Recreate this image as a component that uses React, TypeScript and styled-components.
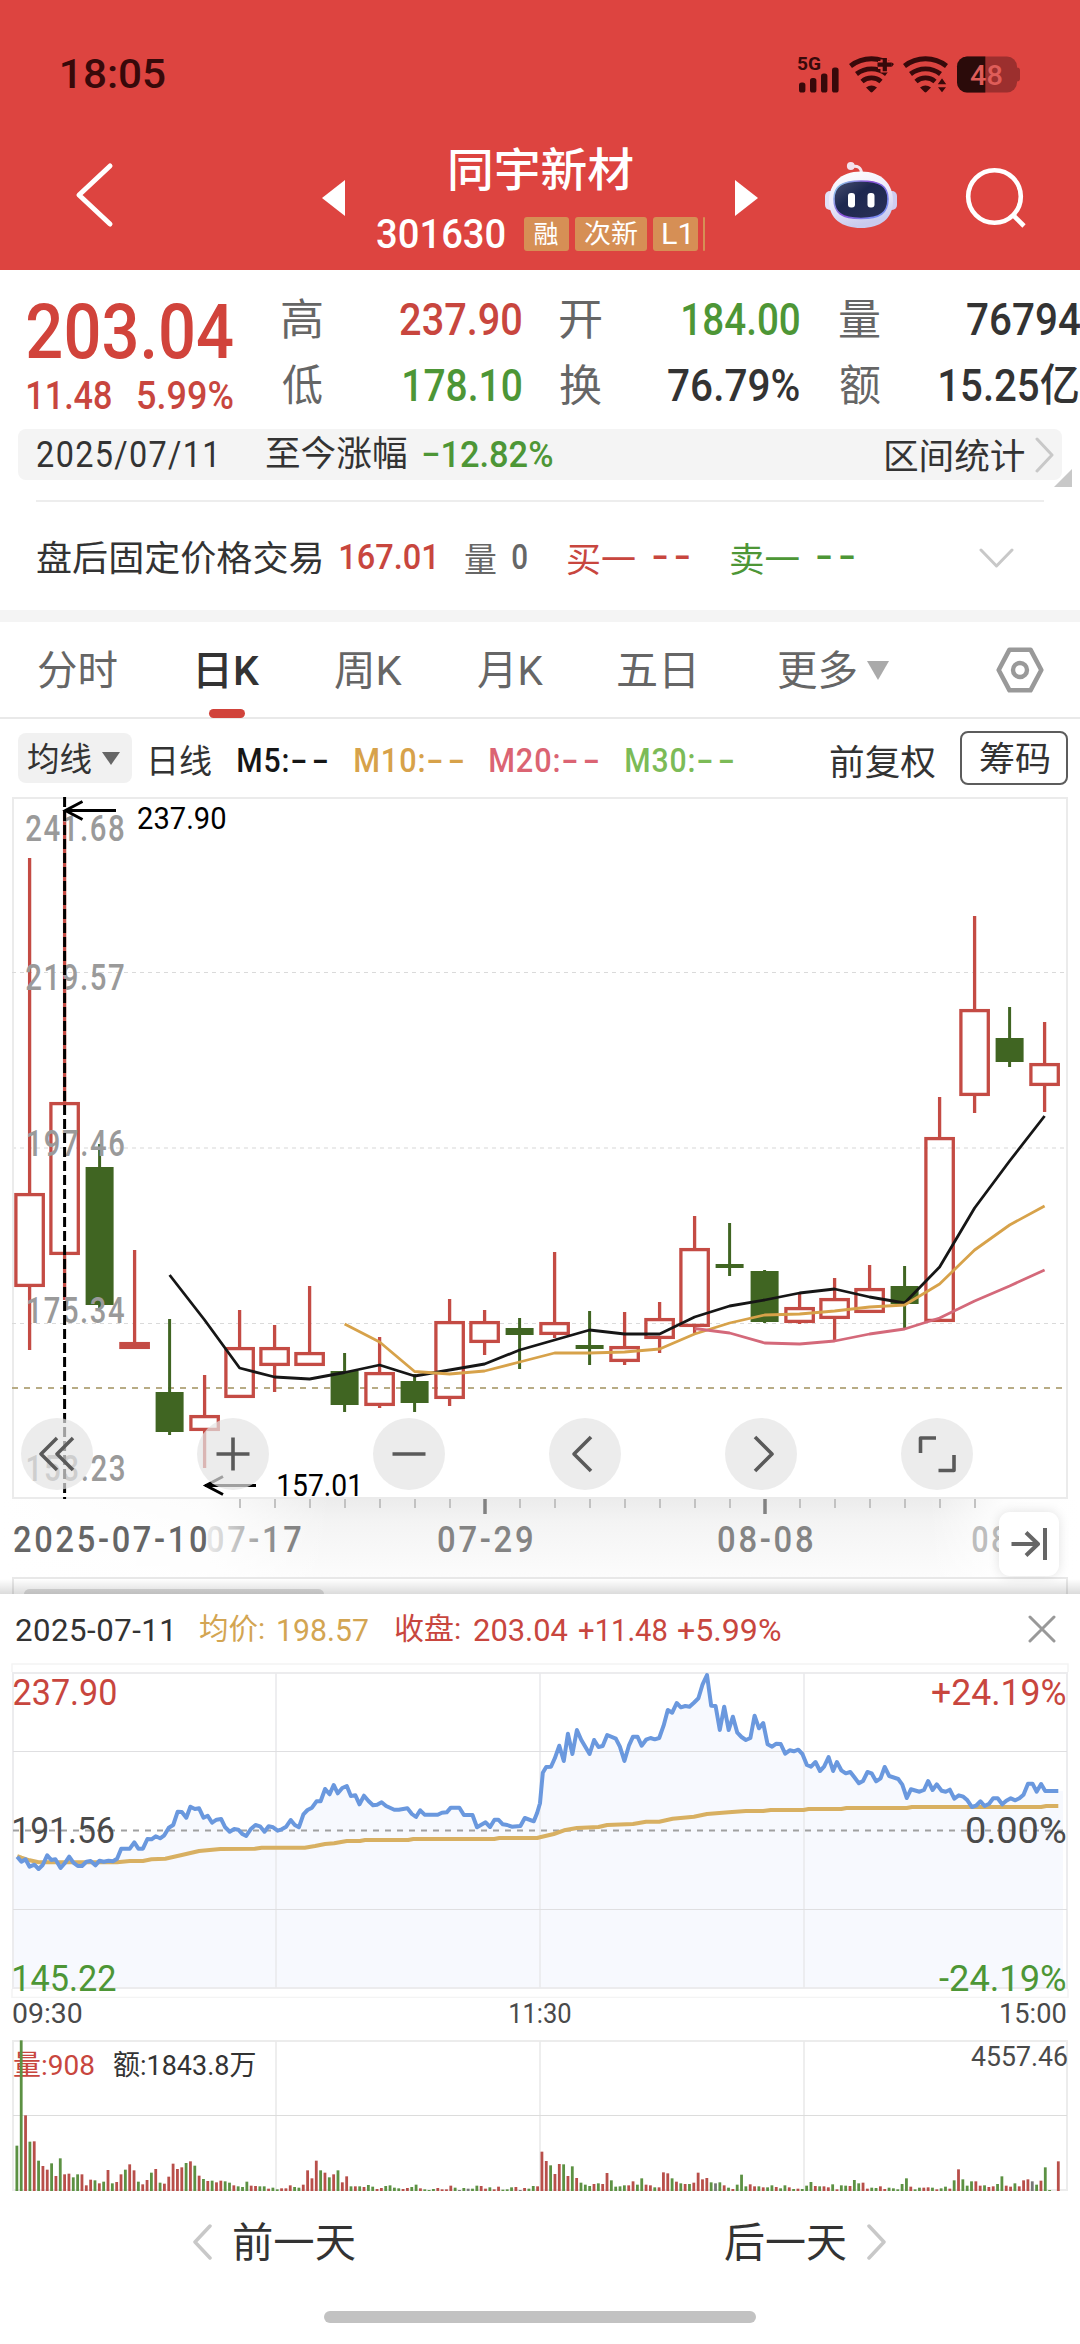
import React from 'react';
import styled, { createGlobalStyle, css } from 'styled-components';

const FONT = 'Roboto, "Noto Sans CJK SC", sans-serif';
const RED = '#c8463e';
const GREEN = '#4d9636';
const INK = '#333333';
const CANDLE_RED = '#c44b44';
const CANDLE_GREEN = '#406522';

const GlobalStyle = createGlobalStyle`
  html, body { margin: 0; padding: 0; background: #fff; }
  body { font-family: ${FONT}; overflow: hidden; }
  * { box-sizing: border-box; }
  svg { display: block; flex: none; }
`;

/* ---------- condensed text: glyphs squeezed to a given ink width ---------- */

const measureCtx = document.createElement('canvas').getContext('2d')! as CanvasRenderingContext2D & { letterSpacing: string };

function inkFit(text: string, size: number, weight: number, width: number, spacing = 0) {
  measureCtx.font = `${weight} ${size}px ${FONT}`;
  const m = measureCtx.measureText(text);
  const left = -m.actualBoundingBoxLeft;
  const ink = m.actualBoundingBoxLeft + m.actualBoundingBoxRight + spacing * (text.length - 1);
  const scale = width / ink;
  return { scale, shift: -left * scale };
}

const FitBox = styled.span<{ $w: number; $gap: number; $size: number; $dy: number }>`
  display: block;
  flex: none;
  width: ${p => p.$w}px;
  height: ${p => p.$size}px;
  margin-left: ${p => p.$gap}px;
  margin-top: ${p => p.$dy * 2}px;
`;
const FitInk = styled.span<{ $size: number; $color: string; $weight: number; $spacing: number }>`
  display: inline-block;
  vertical-align: top;
  white-space: pre;
  transform-origin: 0 50%;
  font: ${p => p.$weight} ${p => p.$size}px/${p => p.$size}px ${FONT};
  letter-spacing: ${p => p.$spacing}px;
  color: ${p => p.$color};
`;

type FitProps = {
  children: string; w: number; size: number; gap?: number; color?: string; weight?: number; dy?: number; spacing?: number;
};
function Fit({ children, w, size, gap = 0, color = INK, weight = 400, dy = 0, spacing = 0 }: FitProps) {
  const { scale, shift } = inkFit(children, size, weight, w, spacing);
  return (
    <FitBox $w={w} $gap={gap} $size={size} $dy={dy}>
      <FitInk $size={size} $color={color} $weight={weight} $spacing={spacing}
        style={{ transform: `translateX(${shift}px) scaleX(${scale})` }}>{children}</FitInk>
    </FitBox>
  );
}

type LabelProps = { x: number; x2: number; y: number; size: number; fill: string; weight?: number; spacing?: number; children: string };
function ChartLabel({ x, x2, y, size, fill, weight = 400, spacing = 0, children }: LabelProps) {
  const { scale, shift } = inkFit(children, size, weight, x2 - x, spacing);
  return (
    <text transform={`translate(${x + shift} ${y}) scale(${scale} 1)`} fontFamily={FONT}
      fontSize={size} fontWeight={weight} letterSpacing={spacing} fill={fill}>{children}</text>
  );
}

/* ---------- layout ---------- */

const Screen = styled.div`
  width: 1080px;
  height: 2344px;
  overflow: hidden;
  background: #fff;
  display: flex;
  flex-direction: column;
`;
const Header = styled.header`
  height: 270px;
  background: #dd4440;
  flex: none;
`;
const StatusBar = styled.div`
  height: 147px;
  padding: 0 50px 0 62px;
  display: flex;
  align-items: center;
  justify-content: space-between;
`;
const NavBar = styled.nav`
  height: 96px;
  padding-left: 74px;
  display: flex;
  align-items: center;
`;
const Spaced = styled.div<{ $gap: number; $drop?: number }>`
  margin-left: ${p => p.$gap}px;
  margin-top: ${p => (p.$drop ?? 0) * 2}px;
  flex: none;
`;
const TitleBlock = styled.div`
  width: 328px;
  margin: 0 0 0 32px;
  align-self: flex-start;
  display: flex;
  flex-direction: column;
  align-items: center;
`;
const CodeRow = styled.div`
  width: 100%;
  height: 34px;
  margin-top: 24px;
  display: flex;
  align-items: center;
`;
const Tag = styled.span<{ $w: number; $gap: number }>`
  width: ${p => p.$w}px;
  height: 34px;
  margin-left: ${p => p.$gap}px;
  border-radius: 3px;
  background: #d68f55;
  display: flex;
  align-items: center;
  justify-content: center;
`;
const Quote = styled.section`
  height: 159px;
  padding: 17px 0 0 28px;
  display: flex;
  flex: none;
`;
const PriceColumn = styled.div`
  width: 205px;
  display: flex;
  flex-direction: column;
`;
const Line = styled.div<{ $h: number }>`
  height: ${p => p.$h}px;
  display: flex;
  align-items: center;
  flex: none;
`;
const StatColumn = styled.div<{ $gap: number; $w: number }>`
  width: ${p => p.$w}px;
  margin-left: ${p => p.$gap}px;
  flex: none;
`;
const Stat = styled.div<{ $pr?: number }>`
  height: 66px;
  padding-right: ${p => p.$pr ?? 0}px;
  display: flex;
  align-items: center;
  justify-content: space-between;
`;
const RangeBar = styled.div`
  position: relative;
  height: 51px;
  margin: 0 18px;
  padding: 0 8px 0 19px;
  border-radius: 8px;
  background: #f4f4f4;
  display: flex;
  align-items: center;
  flex: none;
`;
const Push = styled.div`
  flex: 1;
`;
const Corner = styled.i`
  position: absolute;
  right: -10px;
  bottom: -7px;
  border-left: 18px solid transparent;
  border-bottom: 18px solid #c8c8c8;
`;
const Divider = styled.hr`
  width: 1008px;
  height: 2px;
  margin: 20px 36px 0;
  border: 0;
  background: #ededed;
  flex: none;
`;
const AfterHours = styled.section`
  height: 108px;
  padding: 4px 0 0 37px;
  display: flex;
  align-items: center;
  flex: none;
`;
const Band = styled.div`
  height: 12px;
  background: #f4f4f4;
  flex: none;
`;
const Tabs = styled.nav`
  height: 97px;
  padding: 4px 0 0 38px;
  border-bottom: 2px solid #e9e9e9;
  display: flex;
  align-items: center;
  flex: none;
`;
const Tab = styled.div<{ $gap: number; $active?: boolean }>`
  position: relative;
  height: 100%;
  margin-left: ${p => p.$gap}px;
  display: flex;
  align-items: center;
  ${p => p.$active && css`
    &::after {
      content: '';
      position: absolute;
      left: 11px;
      bottom: -1px;
      width: 36px;
      height: 9px;
      border-radius: 5px;
      background: #d1433b;
    }
  `}
`;
const MaRow = styled.div`
  height: 78px;
  padding-left: 18px;
  display: flex;
  align-items: center;
  flex: none;
`;
const MaButton = styled.div`
  width: 114px;
  height: 50px;
  padding: 0 12px 0 10px;
  border-radius: 8px;
  background: #f1f1f1;
  display: flex;
  align-items: center;
  justify-content: space-between;
`;
const MaItem = styled.div<{ $gap: number }>`
  height: 34px;
  margin: 4px 0 0 ${p => p.$gap}px;
  display: flex;
  align-items: center;
`;
const ChipButton = styled.div`
  width: 108px;
  height: 54px;
  margin-left: 25px;
  border: 2px solid #5c5c5c;
  border-radius: 8px;
  display: flex;
  align-items: center;
  justify-content: center;
`;
const ChartArea = styled.section`
  position: relative;
  height: 797px;
  flex: none;
`;
const Controls = styled.div`
  position: absolute;
  left: 21px;
  top: 621px;
  display: flex;
  gap: 104px;
`;
const RoundButton = styled.div`
  width: 72px;
  height: 72px;
  border-radius: 50%;
  background: rgba(228, 228, 228, 0.7);
  display: flex;
  align-items: center;
  justify-content: center;
`;
const JumpButton = styled.div`
  position: absolute;
  left: 999px;
  top: 715px;
  width: 60px;
  height: 64px;
  border-radius: 11px;
  background: #fff;
  box-shadow: 0 0 12px rgba(0, 0, 0, 0.12);
  display: flex;
  align-items: center;
  justify-content: center;
`;
const Sheet = styled.section`
  display: flex;
  flex-direction: column;
  flex: none;
`;
const SheetHeader = styled.div`
  height: 69px;
  padding: 3px 0 0 16px;
  display: flex;
  align-items: center;
`;
const TimeAxis = styled.div`
  height: 32px;
  margin-bottom: 10px;
  padding-left: 13px;
  display: flex;
  align-items: center;
`;
const DayNav = styled.div`
  height: 100px;
  padding-left: 193px;
  display: flex;
  align-items: center;
`;
const HomeIndicator = styled.div`
  width: 432px;
  height: 12px;
  margin: 19px auto 0;
  border-radius: 6px;
  background: #c2c2c2;
`;

/* ---------- icons ---------- */

type StrokeProps = { w: number; h: number; d: string; stroke: string; sw: number; cap?: 'round' | 'butt' };
const StrokeIcon = ({ w, h, d, stroke, sw, cap = 'round' }: StrokeProps) => (
  <svg width={w} height={h} viewBox={`0 0 ${w} ${h}`} fill="none">
    <path d={d} stroke={stroke} strokeWidth={sw} strokeLinecap={cap} strokeLinejoin="round" />
  </svg>
);
const Solid = ({ w, h, d, fill }: { w: number; h: number; d: string; fill: string }) => (
  <svg width={w} height={h} viewBox={`0 0 ${w} ${h}`}><path d={d} fill={fill} /></svg>
);

const DARK = '#38090a';
const Wifi = ({ cx }: { cx: number }) => (
  <g>
    <g fill="none" stroke={DARK} strokeWidth="4.8">
      <path d={`M${cx - 21} 65.500A34 34 0 0 1 ${cx + 21} 65.500`} />
      <path d={`M${cx - 15} 73.500A24.500 24.500 0 0 1 ${cx + 15} 73.500`} />
      <path d={`M${cx - 9.500} 81A14.500 14.500 0 0 1 ${cx + 9.500} 81`} />
    </g>
    <path d={`M${cx - 5.500} 87Q${cx} 83 ${cx + 5.500} 87L${cx + 1} 91.600Q${cx} 92.400 ${cx - 1} 91.600Z`} fill={DARK} />
  </g>
);
const StatusIcons = () => (
  <svg width="240" height="48" viewBox="790 49.5 240 48">
    <ChartLabel x={797} x2={820} y={69.3} size={17.5} weight={700} fill={DARK}>5G</ChartLabel>
    <rect x="799" y="82" width="6.4" height="10" rx="2.6" fill={DARK} />
    <rect x="810" y="77.6" width="6.4" height="14.4" rx="2.6" fill={DARK} />
    <rect x="821" y="73" width="6.4" height="19" rx="2.6" fill={DARK} />
    <rect x="832" y="67" width="6.6" height="25" rx="2.6" fill={DARK} />
    <Wifi cx={871.5} />
    <path d="M884.5 59V72M878 64.5H892" stroke="#dd4440" strokeWidth="8" />
    <path d="M884.8 57.6V70.8M877.5 64.2H891.8" stroke={DARK} strokeWidth="4.2" />
    <Wifi cx={925.5} />
    <path d="M936.5 84.4L942 76.600L947.500 84.400ZM936.500 86L942 93L947.500 86Z" fill={DARK} stroke="#dd4440" strokeWidth="1.4" />
    <path d="M1015 67h2a3 3 0 0 1 3 3v8a3 3 0 0 1-3 3h-2z" fill="#9c2f2e" />
    <rect x="957" y="56" width="60" height="36" rx="10" fill="#9c2f2e" />
    <path d="M985.3 56H967a10 10 0 0 0-10 10v16a10 10 0 0 0 10 10h18.300z" fill="#2b0b0a" />
    <ChartLabel x={970} x2={1002} y={84} size={28} weight={500} fill="#df5d59">48</ChartLabel>
  </svg>
);

const Robot = () => (
  <svg width="74" height="68" viewBox="824 161 74 68">
    <defs>
      <linearGradient id="shell" x1="0" y1="0" x2="0.3" y2="1">
        <stop offset="0" stopColor="#ffffff" />
        <stop offset="0.55" stopColor="#eeeafa" />
        <stop offset="1" stopColor="#c9cbee" />
      </linearGradient>
      <linearGradient id="visor" x1="0" y1="0" x2="1" y2="1">
        <stop offset="0" stopColor="#4a5070" />
        <stop offset="0.4" stopColor="#1d2850" />
        <stop offset="1" stopColor="#2b3157" />
      </linearGradient>
      <linearGradient id="rim" x1="0" y1="0" x2="1" y2="0.6">
        <stop offset="0" stopColor="#8fe0ee" />
        <stop offset="0.5" stopColor="#8b50d8" />
        <stop offset="1" stopColor="#7a8cf0" />
      </linearGradient>
    </defs>
    <path d="M852 166.500Q861 165 861.500 173" fill="none" stroke="#f5e6ee" strokeWidth="3" />
    <circle cx="850.800" cy="166" r="3.900" fill="#f4e2ee" />
    <rect x="825" y="191" width="12" height="19" rx="5" fill="#e2e0f6" />
    <rect x="885" y="191" width="12" height="19" rx="5" fill="#cfcdf0" />
    <path d="M861 171.500C882 171.500 893 184 893 201C893 219 880 228 861 228C842 228 829 219 829 201C829 184 840 171.500 861 171.500Z" fill="url(#shell)" />
    <path d="M861 181C880 181 888 186 888 199C888 213 880 218.500 861 218.500C842 218.500 834 213 834 199C834 186 842 181 861 181Z" fill="url(#visor)" stroke="url(#rim)" strokeWidth="1.600" />
    <rect x="848" y="193" width="7" height="14.500" rx="3" fill="#fff" />
    <rect x="867.500" y="193" width="7" height="14.500" rx="3" fill="#fff" />
  </svg>
);
const SearchIcon = () => (
  <svg width="64" height="64" viewBox="964 165 64 64" fill="none" stroke="#fff" strokeWidth="4.600">
    <circle cx="994.500" cy="196.500" r="26.300" />
    <path d="M1013 215L1024 226" />
  </svg>
);
const HexIcon = () => (
  <svg width="48" height="46" viewBox="0 0 48 46" fill="none" stroke="#999" strokeWidth="4.600" strokeLinejoin="round">
    <path d="M13.500 2.700H34.500L45.300 23L34.500 43.300H13.500L2.700 23Z" />
    <circle cx="24" cy="23" r="7" strokeWidth="4.400" />
  </svg>
);

/* ---------- daily candles ---------- */

type Candle = ['R' | 'G', number, number, number, number];
/* colour, high, body top, body bottom, low */
const candles: Candle[] = [
  ['R', 858, 1193, 1287, 1350], ['R', 810, 1102, 1255, 1300], ['G', 1144, 1167, 1305, 1308],
  ['R', 1250, 1342, 1349, 1349], ['G', 1319, 1392, 1432, 1435], ['R', 1375, 1415, 1431, 1468],
  ['R', 1310, 1347, 1398, 1398], ['R', 1325, 1347, 1366, 1392], ['R', 1286, 1352, 1366, 1366],
  ['G', 1353, 1371, 1405, 1412], ['R', 1337, 1372, 1406, 1408], ['G', 1374, 1381, 1403, 1412],
  ['R', 1299, 1321, 1399, 1406], ['R', 1310, 1321, 1343, 1355], ['G', 1318, 1328, 1335, 1369],
  ['R', 1252, 1322, 1335, 1338], ['G', 1311, 1345, 1349, 1365], ['R', 1312, 1346, 1362, 1365],
  ['R', 1302, 1318, 1339, 1353], ['R', 1216, 1248, 1327, 1333], ['G', 1223, 1264, 1268, 1276],
  ['G', 1270, 1271, 1322, 1323], ['R', 1294, 1307, 1323, 1324], ['R', 1278, 1298, 1319, 1341],
  ['R', 1265, 1288, 1313, 1313], ['G', 1266, 1286, 1304, 1328], ['R', 1097, 1137, 1322, 1322],
  ['R', 916, 1009, 1096, 1113], ['G', 1007, 1038, 1062, 1067], ['R', 1022, 1063, 1086, 1112],
];
const candleX = (n: number) => 29.6 + 35 * n;
const maLines = [
  { color: '#161616', from: 4, ys: [1275, 1320, 1368, 1377, 1379, 1372.5, 1365, 1376, 1370, 1364, 1350, 1340, 1330, 1334, 1334, 1317, 1306, 1300, 1293, 1289, 1297, 1303, 1267, 1208, 1161, 1116] },
  { color: '#d7a24a', from: 9, ys: [1324, 1342, 1371.5, 1374, 1371, 1362, 1353, 1353, 1352, 1349, 1334, 1323, 1315, 1314, 1311, 1307, 1305, 1284, 1250, 1225, 1206] },
  { color: '#d4697a', from: 19, ys: [1328.5, 1333, 1343, 1344, 1341, 1334, 1329, 1318, 1301, 1286, 1270] },
];

const KLineChart = () => (
  <svg width="1080" height="797" viewBox="0 797 1080 797" fill="none">
    <defs>
      <linearGradient id="axisBg" x1="0" y1="0" x2="0" y2="1">
        <stop offset="0" stopColor="#ececec" /><stop offset="0.3" stopColor="#f4f4f4" /><stop offset="1" stopColor="#fcfcfc" />
      </linearGradient>
      <linearGradient id="fadeL" x1="0" y1="0" x2="1" y2="0">
        <stop offset="0" stopColor="#fff" /><stop offset="0.62" stopColor="#fff" stopOpacity="0.85" /><stop offset="1" stopColor="#fff" stopOpacity="0" />
      </linearGradient>
      <linearGradient id="fadeR" x1="0" y1="0" x2="1" y2="0">
        <stop offset="0" stopColor="#fff" stopOpacity="0" /><stop offset="0.5" stopColor="#fff" stopOpacity="0.9" /><stop offset="1" stopColor="#fff" />
      </linearGradient>
      <linearGradient id="sheetShade" x1="0" y1="0" x2="0" y2="1">
        <stop offset="0" stopColor="#000" stopOpacity="0" /><stop offset="1" stopColor="#000" stopOpacity="0.14" />
      </linearGradient>
      <linearGradient id="dateFade" x1="0" y1="0" x2="1" y2="0">
        <stop offset="0" stopColor="#ededed" /><stop offset="0.45" stopColor="#b0b0b0" /><stop offset="0.75" stopColor="#848484" />
      </linearGradient>
    </defs>

    <rect x="0" y="1499" width="1080" height="79" fill="url(#axisBg)" />
    <rect x="0" y="1499" width="330" height="79" fill="url(#fadeL)" />
    <rect x="930" y="1499" width="150" height="79" fill="url(#fadeR)" />

    <rect x="13" y="798" width="1054" height="700" stroke="#ebebeb" strokeWidth="2" />
    <path d="M12 972.500H1065M12 1323.500H1065" stroke="#dadada" strokeDasharray="4 4" />
    <path d="M12 1148H1065" stroke="#ebebeb" strokeWidth="2" strokeDasharray="4 4" />
    <path d="M12 1388H1065" stroke="#b8ac85" strokeWidth="2" strokeDasharray="6 6" />

    {candles.map(([c, high, top, bottom, low], n) => {
      const x = candleX(n);
      if (c === 'G') {
        return (
          <g key={n}>
            <path d={`M${x} ${high}V${low}`} stroke={CANDLE_GREEN} strokeWidth="3" />
            <rect x={x - 14} y={top} width="28" height={bottom - top} fill={CANDLE_GREEN} />
          </g>
        );
      }
      const flat = bottom - top < 9;
      return (
        <g key={n} stroke={CANDLE_RED} strokeWidth="3.300">
          <path d={`M${x} ${high}V${top}M${x} ${bottom}V${low}`} />
          <rect x={x - 13.700} y={top + 1.600} width="27.400" height={bottom - top - 3.200} fill={flat ? CANDLE_RED : 'none'} />
        </g>
      );
    })}
    {maLines.map(l => (
      <polyline key={l.color} stroke={l.color} strokeWidth="2.800" strokeLinejoin="round"
        points={l.ys.map((y, i) => `${candleX(l.from + i)},${y}`).join(' ')} />
    ))}

    <ChartLabel x={26} x2={124} y={841} size={37} weight={500} spacing={2} fill="#9a9a9a">241.68</ChartLabel>
    <ChartLabel x={26} x2={124} y={990} size={37} weight={500} spacing={2} fill="#9a9a9a">219.57</ChartLabel>
    <ChartLabel x={28} x2={124} y={1156} size={37} weight={500} spacing={2} fill="#9a9a9a">197.46</ChartLabel>
    <ChartLabel x={28} x2={124.500} y={1323} size={37} weight={500} spacing={2} fill="#9a9a9a">175.34</ChartLabel>
    <ChartLabel x={28} x2={124} y={1481} size={37} weight={500} spacing={2} fill="#9a9a9a">153.23</ChartLabel>
    <path d="M64.600 797V1499" stroke="#000" strokeWidth="3" strokeDasharray="10 4" />

    <g stroke="#000" strokeWidth="3">
      <path d="M65 810.500H116M82.500 801.500L65.500 810.500L82.500 819.500" />
      <path d="M205 1485.500H256M223 1476.500L206 1485.500L223 1494.500" />
    </g>
    <ChartLabel x={138} x2={225} y={829} size={31.500} fill="#000">237.90</ChartLabel>
    <ChartLabel x={278} x2={358} y={1496} size={31.500} fill="#000">157.01</ChartLabel>

    {Array.from({ length: 22 }, (_, i) => i + 6).map(n => (
      n === 13 || n === 21
        ? <path key={n} d={`M${candleX(n) + 0.400} 1499V1514`} stroke="#828282" strokeWidth="3.500" />
        : <path key={n} d={`M${candleX(n) + 0.400} 1499V1508`} stroke="#c2c2c2" strokeWidth="2" />
    ))}
    <ChartLabel x={14} x2={206} y={1552} size={36.500} weight={500} spacing={3} fill="#666">2025-07-10</ChartLabel>
    <ChartLabel x={207} x2={301} y={1552} size={36.500} weight={500} spacing={3} fill="url(#dateFade)">07-17</ChartLabel>
    <ChartLabel x={438} x2={532} y={1552} size={36.500} weight={500} spacing={3} fill="#848484">07-29</ChartLabel>
    <ChartLabel x={718} x2={812} y={1552} size={36.500} weight={500} spacing={3} fill="#848484">08-08</ChartLabel>
    <ChartLabel x={972} x2={1007} y={1552} size={36.500} weight={500} spacing={3} fill="#bdbdbd">08</ChartLabel>

    <path d="M12 1578H1068M13 1578V1594M1067 1578V1594" stroke="#e8e8e8" strokeWidth="2" />
    <path d="M24 1594a6 5 0 0 1 6-5H318a6 5 0 0 1 6 5z" fill="#dedede" />
    <rect x="0" y="1579" width="1080" height="15" fill="url(#sheetShade)" />
  </svg>
);

/* ---------- intraday ---------- */

/* readings are kept in plot units: 2.9037 per px across, 3 per px down */
const px = (u: number) => u / 2.9037;
const py = (v: number) => 1590 + v / 3;
const SECOND_HALF = 1568;
const toPoints = (am: number[], pm: number[]) => {
  const out: string[] = [];
  for (let i = 0; i < am.length; i += 2) out.push(`${px(am[i]).toFixed(1)},${py(am[i + 1]).toFixed(1)}`);
  for (let i = 0; i < pm.length; i += 2) out.push(`${px(pm[i] + SECOND_HALF).toFixed(1)},${py(pm[i + 1]).toFixed(1)}`);
  return out.join(' ');
};
const pricePoints = toPoints(
  [50, 800, 62, 815, 74, 808, 86, 830, 100, 824, 112, 837, 124, 825, 137, 796, 149, 810, 161, 808, 176, 834, 188, 820, 201, 800, 213, 818, 226, 828, 238, 828, 251, 815, 263, 813, 277, 826, 289, 812, 301, 815, 315, 812, 328, 814, 340, 806, 352, 776, 377, 776, 390, 757, 402, 776, 415, 776, 428, 747, 440, 748, 452, 739, 465, 745, 477, 736, 490, 713, 503, 705, 516, 665, 528, 666, 541, 683, 553, 650, 566, 657, 578, 655, 591, 683, 603, 677, 616, 698, 629, 689, 642, 687, 654, 712, 667, 725, 680, 717, 692, 719, 704, 732, 715, 738, 729, 716, 742, 705, 755, 709, 768, 725, 780, 709, 793, 712, 806, 722, 818, 718, 831, 710, 844, 690, 856, 705, 868, 712, 881, 673, 893, 660, 906, 653, 919, 634, 931, 634, 944, 597, 957, 613, 969, 585, 981, 610, 994, 594, 1007, 588, 1019, 618, 1032, 616, 1044, 643, 1057, 617, 1070, 633, 1083, 646, 1095, 644, 1108, 637, 1121, 648, 1145, 659, 1158, 659, 1183, 655, 1196, 672, 1208, 681, 1220, 661, 1233, 674, 1271, 674, 1283, 668, 1297, 667, 1309, 653, 1334, 653, 1347, 675, 1372, 675, 1385, 712, 1410, 697, 1423, 711, 1436, 689, 1447, 689, 1460, 703, 1473, 705, 1486, 710, 1511, 708, 1524, 684, 1550, 694, 1560, 668],
  [0, 640, 8, 548, 18, 531, 32, 530, 43, 505, 56, 467, 69, 513, 81, 431, 94, 492, 107, 420, 120, 450, 144, 492, 157, 450, 170, 471, 182, 468, 195, 435, 220, 446, 232, 470, 245, 513, 258, 467, 270, 440, 283, 440, 295, 467, 308, 449, 321, 444, 333, 448, 346, 444, 359, 407, 371, 360, 384, 368, 397, 339, 409, 352, 422, 348, 434, 350, 447, 338, 460, 325, 472, 283, 485, 255, 497, 347, 510, 348, 522, 420, 535, 350, 548, 420, 560, 380, 573, 428, 585, 441, 598, 450, 611, 444, 623, 377, 636, 415, 648, 399, 661, 463, 674, 470, 686, 461, 699, 462, 712, 491, 725, 481, 737, 484, 750, 479, 762, 492, 775, 525, 787, 530, 800, 516, 813, 543, 825, 530, 838, 501, 851, 543, 862, 516, 875, 541, 888, 550, 901, 546, 913, 562, 926, 580, 938, 573, 951, 546, 963, 550, 976, 574, 989, 565, 1001, 531, 1014, 558, 1040, 567, 1052, 584, 1065, 624, 1077, 598, 1102, 605, 1115, 600, 1127, 573, 1140, 600, 1152, 583, 1166, 602, 1178, 605, 1190, 599, 1203, 626, 1216, 616, 1229, 620, 1241, 631, 1254, 651, 1266, 647, 1279, 634, 1291, 648, 1304, 641, 1316, 625, 1329, 625, 1342, 643, 1354, 632, 1367, 625, 1380, 631, 1392, 625, 1404, 614, 1417, 581, 1430, 581, 1442, 605, 1455, 582, 1467, 603, 1505, 603],
);
const averagePoints = toPoints(
  [50, 798, 62, 803, 86, 811, 112, 817, 340, 817, 377, 813, 415, 813, 440, 808, 480, 806, 528, 795, 578, 783, 640, 777, 740, 776, 760, 773, 885, 773, 915, 768, 944, 762, 970, 760, 1007, 753, 1045, 753, 1060, 750, 1185, 750, 1200, 747, 1435, 747, 1450, 744, 1560, 744],
  [0, 742, 40, 732, 70, 721, 107, 714, 170, 711, 195, 705, 270, 702, 308, 695, 346, 695, 385, 686, 447, 680, 485, 672, 548, 667, 598, 663, 648, 663, 670, 660, 765, 660, 780, 657, 875, 657, 890, 654, 1065, 654, 1080, 651, 1455, 651, 1470, 648, 1505, 648],
);

const IntradayChart = () => (
  <svg width="1080" height="335" viewBox="0 1663 1080 335" fill="none">
    <path d="M12 1672V1664H1068V1672M12 1989V1997.500H1068V1989" stroke="#f4f4f4" strokeWidth="1.500" />
    <polygon points={`13,1856 ${pricePoints} 1063,1791 1063,1987 13,1987`} fill="#f7f9fe" />
    <rect x="13" y="1673" width="1054" height="315" stroke="#ececee" strokeWidth="2" />
    <path d="M276 1673V1988M540 1673V1988M804 1673V1988" stroke="#e9e9ec" strokeWidth="1.500" />
    <path d="M13 1751.500H1067M13 1909.500H1067" stroke="#dfdfe1" />
    <path d="M13 1830.500H1067" stroke="#a0a0a0" strokeWidth="2" strokeDasharray="6 6" />
    <polyline points={averagePoints} stroke="#d8b062" strokeWidth="4" strokeLinejoin="round" />
    <polyline points={pricePoints} stroke="#6a98de" strokeWidth="4" strokeLinejoin="round" />
    <ChartLabel x={13.500} x2={116} y={1705} size={36.500} fill={RED}>237.90</ChartLabel>
    <ChartLabel x={14} x2={113.500} y={1843} size={36.500} fill="#4a4a4a">191.56</ChartLabel>
    <ChartLabel x={14} x2={116} y={1991} size={36.500} fill={GREEN}>145.22</ChartLabel>
    <ChartLabel x={932} x2={1066} y={1705} size={36.500} fill={RED}>+24.19%</ChartLabel>
    <ChartLabel x={967} x2={1066} y={1843} size={36.500} fill="#4a4a4a">0.00%</ChartLabel>
    <ChartLabel x={939} x2={1066} y={1991} size={36.500} fill={GREEN}>-24.19%</ChartLabel>
  </svg>
);

/* one bar a minute: letter is the colour (G falling, R rising, K flat), number the height */
const volumes = (
  'G136 G452 R227 G148 R149 G91 R75 R64 G83 R45 G98 R50 R52 G41 G50 R50 R17 R34 G32 R23 G28 R63 G23 R27 R50 G64 R80 R62 G28 R20 ' +
  'R33 G55 R66 G25 R22 R43 R82 R66 R71 G84 R89 G76 R46 G36 R30 G31 R26 R31 G29 G25 R17 G14 G12 G28 R16 R15 G14 G14 R7 G10 ' +
  'G5 R8 R8 R17 G12 G10 R19 R62 R38 R91 G62 R55 G41 R50 G62 R26 R44 G14 R14 G14 R12 G18 G13 R6 R9 G15 G17 G10 G8 R6 ' +
  'R9 G12 G19 R8 G5 G3 G6 R9 R5 R5 R16 G10 K3 G9 K7 G7 G16 R15 R7 G11 R5 R13 G4 G5 G11 R12 K3 R9 G7 G15 ' +
  'R14 R118 R90 G77 R51 R81 G80 R45 G74 R39 G25 G19 G15 R21 G23 R21 R54 G32 G13 G14 G17 R17 R29 G19 G38 R19 R17 G11 R11 R56 ' +
  'R53 G38 R28 G23 R21 G21 R25 R55 R35 R39 G26 K23 G26 R17 G10 R6 G19 G49 G14 R20 R14 G14 R11 G11 G17 R12 G8 G17 R11 G6 ' +
  'R7 G6 G16 G27 R15 G14 R14 R11 G20 R5 G17 G16 R15 G33 G23 R25 R7 G10 G9 R14 R6 G10 G8 G5 G21 G38 R13 G5 G10 R10 ' +
  'R11 G10 R5 G8 G13 R7 G32 R65 G35 G16 G29 R29 R16 G17 R12 R14 G21 G44 R16 R13 G23 R14 R32 R35 K29 G19 R31 G71 G3 G0 R89'
).split(' ').map(s => ({ kind: s[0], h: Number(s.slice(1)) / 3 }));
const volumeColor: Record<string, string> = { G: '#5c9143', R: '#b84f4a', K: '#777777' };

const VolumeChart = () => (
  <svg width="1080" height="152" viewBox="0 2040 1080 152" fill="none">
    <rect x="13" y="2041" width="1054" height="149" stroke="#ececec" strokeWidth="2" />
    <path d="M276 2041V2190M540 2041V2190M804 2041V2190" stroke="#e9e9e9" strokeWidth="1.500" />
    <path d="M13 2115.500H1067" stroke="#dcdcdc" />
    <ChartLabel x={14} x2={94} y={2075} size={28.500} fill={RED}>量:908</ChartLabel>
    {volumes.map((v, i) => (
      <rect key={i} x={px(49 + 12.6 * i) - 1.400} y={2191 - v.h} width="2.800" height={v.h} fill={volumeColor[v.kind]} />
    ))}
    <ChartLabel x={114} x2={255} y={2075} size={28.500} fill={INK}>额:1843.8万</ChartLabel>
    <ChartLabel x={971} x2={1067} y={2066} size={28.500} fill="#4a4a4a">4557.46</ChartLabel>
  </svg>
);

/* ---------- screen ---------- */

const GREY = '#666666';
const BTN = '#5a5a5a';

const Average = ({ name, w, gap, color }: { name: string; w: number; gap: number; color: string }) => (
  <MaItem $gap={gap}>
    <Fit w={w} size={33} weight={500} color={color} spacing={1}>{name}</Fit>
    <Fit w={35} gap={4} size={33} weight={500} color={color} spacing={3}>--</Fit>
  </MaItem>
);

export default function App() {
  return (
    <Screen>
      <GlobalStyle />
      <Header>
        <StatusBar>
          <Fit w={103} size={40.5} weight={500} color={DARK} dy={1}>18:05</Fit>
          <StatusIcons />
        </StatusBar>
        <NavBar>
          <StrokeIcon w={40} h={66} d="M36 4L5 33L36 62" stroke="#fff" sw={5} />
          <Spaced $gap={208} $drop={3}><Solid w={23} h={36} d="M23 0V36L0 18Z" fill="#fff" /></Spaced>
          <TitleBlock>
            <Fit w={183} size={46} weight={500} color="#fff">同宇新材</Fit>
            <CodeRow>
              <Fit w={128} size={41} weight={500} color="#fff">301630</Fit>
              <Tag $w={45} $gap={19}><Fit w={24} size={25} color="#fff">融</Fit></Tag>
              <Tag $w={72} $gap={6}><Fit w={52} size={26} color="#fff">次新</Fit></Tag>
              <Tag $w={45} $gap={6}><Fit w={26} size={29} color="#fff">L1</Fit></Tag>
              <Tag $w={2} $gap={5} />
            </CodeRow>
          </TitleBlock>
          <Spaced $gap={30} $drop={3}><Solid w={23} h={36} d="M0 0V36L23 18Z" fill="#fff" /></Spaced>
          <Spaced $gap={66}><Robot /></Spaced>
          <Spaced $gap={66} $drop={2}><SearchIcon /></Spaced>
        </NavBar>
      </Header>

      <Quote>
        <PriceColumn>
          <Line $h={90}><Fit w={205} size={76} weight={500} color="#d1433b">203.04</Fit></Line>
          <Line $h={38}>
            <Fit w={83} size={38} weight={500} color={RED}>11.48</Fit>
            <Fit w={95} gap={27} size={38} weight={500} color={RED}>5.99%</Fit>
          </Line>
        </PriceColumn>
        <StatColumn $gap={49} $w={239}>
          <Stat><Fit w={40} size={43} color={GREY}>高</Fit><Fit w={121} size={44} weight={500} color={RED}>237.90</Fit></Stat>
          <Stat><Fit w={40} size={43} color={GREY}>低</Fit><Fit w={117} size={44} weight={500} color={GREEN}>178.10</Fit></Stat>
        </StatColumn>
        <StatColumn $gap={39} $w={239}>
          <Stat><Fit w={41} size={43} color={GREY}>开</Fit><Fit w={116} size={44} weight={500} color={GREEN}>184.00</Fit></Stat>
          <Stat><Fit w={41} size={43} color={GREY}>换</Fit><Fit w={131} size={44} weight={500}>76.79%</Fit></Stat>
        </StatColumn>
        <StatColumn $gap={41} $w={240}>
          <Stat><Fit w={40} size={43} color={GREY}>量</Fit><Fit w={113} size={44} weight={500}>76794</Fit></Stat>
          <Stat $pr={2}><Fit w={40} size={43} color={GREY}>额</Fit><Fit w={138} size={44} weight={500}>15.25亿</Fit></Stat>
        </StatColumn>
      </Quote>

      <RangeBar>
        <Fit w={177} size={36} spacing={1.5}>2025/07/11</Fit>
        <Fit w={140} gap={52} size={35.500}>至今涨幅</Fit>
        <Fit w={129} gap={17} size={36} weight={500} color={GREEN}>−12.82%</Fit>
        <Push />
        <Fit w={139} size={35.500} dy={3}>区间统计</Fit>
        <Spaced $gap={10}><StrokeIcon w={19} h={36} d="M2 2L17 18L2 34" stroke="#c8c8c8" sw={3} /></Spaced>
        <Corner />
      </RangeBar>
      <Divider />
      <AfterHours>
        <Fit w={284} size={35.500} dy={2}>盘后固定价格交易</Fit>
        <Fit w={94} gap={19} size={35.500} weight={500} color={RED}>167.01</Fit>
        <Fit w={31} gap={31} size={34} color={GREY} dy={2}>量</Fit>
        <Fit w={15} gap={16} size={35.500} weight={500} color={GREY}>0</Fit>
        <Fit w={68} gap={40} size={34} color={RED} dy={2}>买一</Fit>
        <Fit w={36} gap={18} size={36} weight={500} color={RED} spacing={4} dy={-1}>--</Fit>
        <Fit w={68} gap={42} size={34} color={GREEN} dy={2}>卖一</Fit>
        <Fit w={37} gap={18} size={36} weight={500} color={GREEN} spacing={4} dy={-1}>--</Fit>
        <Spaced $gap={125}><StrokeIcon w={35} h={20} d="M2 2L17.500 18L33 2" stroke="#c8c8c8" sw={3} /></Spaced>
      </AfterHours>
      <Band />

      <Tabs>
        <Tab $gap={0}><Fit w={79} size={41} color={GREY}>分时</Fit></Tab>
        <Tab $gap={81} $active><Fit w={62} size={41} weight={500}>日K</Fit></Tab>
        <Tab $gap={75}><Fit w={67} size={41} color={GREY}>周K</Fit></Tab>
        <Tab $gap={76}><Fit w={65} size={41} color={GREY}>月K</Fit></Tab>
        <Tab $gap={75}><Fit w={76} size={41} color={GREY}>五日</Fit></Tab>
        <Tab $gap={84}><Fit w={78} size={41} color={GREY}>更多</Fit></Tab>
        <Spaced $gap={11} $drop={-1}><Solid w={22} h={19} d="M0 0H22L11 19Z" fill="#aaaaaa" /></Spaced>
        <Spaced $gap={107} $drop={-2}><HexIcon /></Spaced>
      </Tabs>

      <MaRow>
        <MaButton>
          <Fit w={63} size={33} dy={1}>均线</Fit>
          <Solid w={18} h={13} d="M0 0H18L9 13Z" fill="#666" />
        </MaButton>
        <Fit w={60} gap={19} size={33} dy={3}>日线</Fit>
        <Average name="M5:" w={50} gap={27} color="#161616" />
        <Average name="M10:" w={69} gap={28} color="#d7a24a" />
        <Average name="M20:" w={69} gap={27} color="#db6473" />
        <Average name="M30:" w={68} gap={28} color="#7cbb57" />
        <Fit w={105} gap={97} size={35} dy={5}>前复权</Fit>
        <ChipButton><Fit w={69} size={34} dy={1}>筹码</Fit></ChipButton>
      </MaRow>

      <ChartArea>
        <KLineChart />
        <Controls>
          <RoundButton><StrokeIcon w={36} h={40} d="M18 4L2 20L18 36M34 4L18 20L34 36" stroke={BTN} sw={3.500} cap="butt" /></RoundButton>
          <RoundButton><StrokeIcon w={34} h={34} d="M0.500 17H33.500M17 0.500V33.500" stroke={BTN} sw={3.600} cap="butt" /></RoundButton>
          <RoundButton><StrokeIcon w={34} h={34} d="M0.500 17H33.500" stroke={BTN} sw={3.600} cap="butt" /></RoundButton>
          <RoundButton><StrokeIcon w={30} h={38} d="M21 2L4 19L21 36" stroke={BTN} sw={3.600} cap="butt" /></RoundButton>
          <RoundButton><StrokeIcon w={30} h={38} d="M9 2L26 19L9 36" stroke={BTN} sw={3.600} cap="butt" /></RoundButton>
          <RoundButton><StrokeIcon w={38} h={38} d="M2.500 18V3H18M36 20V35.500H20.500" stroke={BTN} sw={3.600} cap="butt" /></RoundButton>
        </Controls>
        <JumpButton>
          <StrokeIcon w={38} h={34} d="M1.500 17H28M16 5.500L28 17L16 28.500M35 1V33" stroke={GREY} sw={4} cap="butt" />
        </JumpButton>
      </ChartArea>

      <Sheet>
        <SheetHeader>
          <Fit w={155} size={32} spacing={0.5}>2025-07-11</Fit>
          <Fit w={64} gap={29} size={29.500} color="#d3a552">均价:</Fit>
          <Fit w={90} gap={14} size={32} color="#d3a552">198.57</Fit>
          <Fit w={65} gap={27} size={29.500} color={RED}>收盘:</Fit>
          <Fit w={94} gap={14} size={32} color={RED}>203.04</Fit>
          <Fit w={88} gap={11} size={32} color={RED}>+11.48</Fit>
          <Fit w={103} gap={11} size={32} color={RED}>+5.99%</Fit>
          <Spaced $gap={247} $drop={-1}><StrokeIcon w={28} h={28} d="M2 2L26 26M26 2L2 26" stroke="#999" sw={3} /></Spaced>
        </SheetHeader>
        <IntradayChart />
        <TimeAxis>
          <Fit w={69} size={28} color="#4a4a4a">09:30</Fit>
          <Fit w={61} gap={428} size={28} color="#4a4a4a">11:30</Fit>
          <Fit w={65} gap={430} size={28} color="#4a4a4a">15:00</Fit>
        </TimeAxis>
        <VolumeChart />
        <DayNav>
          <StrokeIcon w={19} h={36} d="M17 2L2 18L17 34" stroke="#c8c8c8" sw={3.500} />
          <Fit w={121} gap={22} size={41} dy={1}>前一天</Fit>
          <Fit w={121} gap={370} size={41} dy={1}>后一天</Fit>
          <Spaced $gap={21}><StrokeIcon w={19} h={36} d="M2 2L17 18L2 34" stroke="#c8c8c8" sw={3.500} /></Spaced>
        </DayNav>
        <HomeIndicator />
      </Sheet>
    </Screen>
  );
}
